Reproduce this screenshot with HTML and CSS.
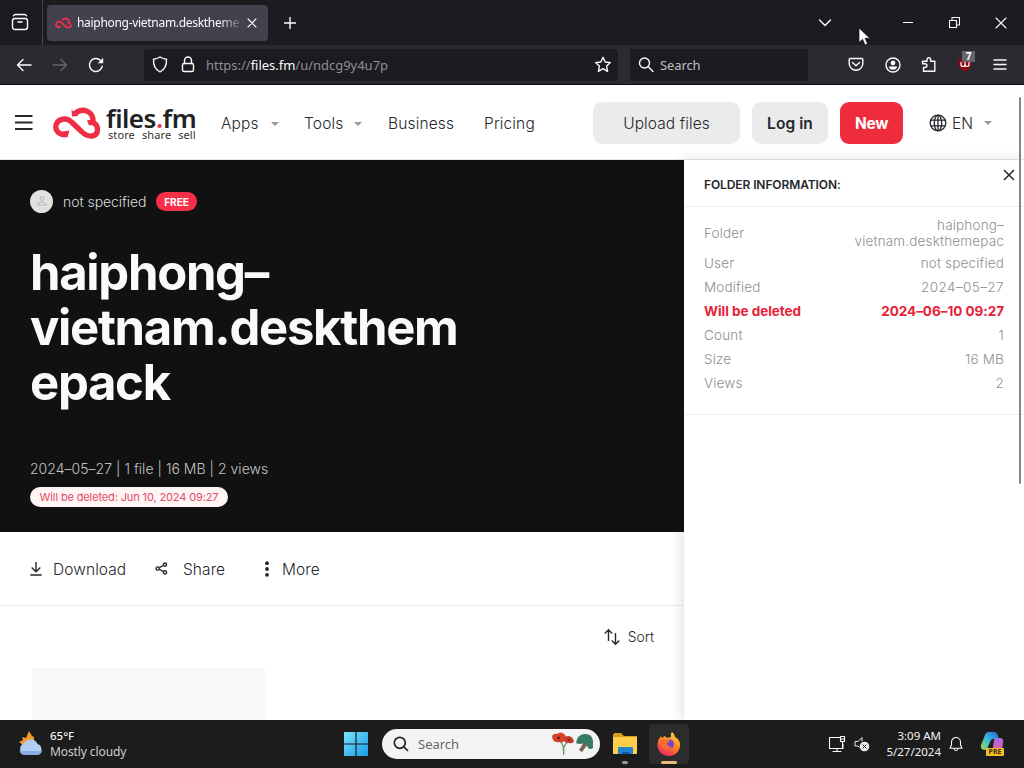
FILE: index.html
```html
<!DOCTYPE html>
<html lang="en">
<head>
    <meta charset="UTF-8">
    <meta name="viewport" content="width=device-width, initial-scale=1.0">
    <title>haiphong-vietnam.deskthemepack</title>
    <link rel="stylesheet" href="styles.css">
</head>
<body>
    <!-- browser tabs -->
    <div class="tabbar">
        <div class="view-btn">
            <svg width="18" height="18" viewBox="0 0 18 18" class="line"><rect x="1.5" y="5.5" width="15" height="11" rx="2.5"/><path d="M2.5 2.8Q3 1.5 4.5 1.5h9q1.500 0 2 1.300M7 9h4"/></svg>
        </div>
        <div class="tab">
            <svg class="tab-logo" width="17" height="12" viewBox="0 0 48 34"><use href="#cloud"/></svg>
            <span class="tab-title">haiphong-vietnam.desktheme</span>
            <svg width="10" height="10" viewBox="0 0 10 10" class="line thin"><path d="M1 1l8 8M9 1l-8 8"/></svg>
        </div>
        <svg class="plus line" width="12" height="12" viewBox="0 0 12 12"><path d="M6 0v12M0 6h12"/></svg>
        <div class="window-btns">
            <svg class="tabs-list line" width="14" height="8" viewBox="0 0 14 8"><path d="M1.500 1L7 6.500 12.500 1"/></svg>
            <svg class="line thin" width="10" height="10" viewBox="0 0 10 10"><path d="M0 4.500h10"/></svg>
            <svg class="line thin" width="11" height="11" viewBox="0 0 11 11"><path d="M.5 3.500h7v7h-7zM3 3V.5h7.500V8H8"/></svg>
            <svg class="line thin" width="12" height="12" viewBox="0 0 12 12"><path d="M1 1l10 10M11 1L1 11"/></svg>
        </div>
    </div>

    <!-- address bar -->
    <div class="toolbar">
        <div class="nav-btns">
            <svg class="line" width="16" height="14" viewBox="0 0 16 14"><path d="M15 7H1.500M7 1.500L1.500 7 7 12.500"/></svg>
            <svg class="line dim" width="16" height="14" viewBox="0 0 16 14"><path d="M1 7h13.500M9 1.500L14.500 7 9 12.500"/></svg>
            <svg class="line" width="16" height="16" viewBox="0 0 16 16"><path d="M14.300 9.200A6.500 6.500 0 1 1 12.300 3.200l2 2"/><path d="M15.200.8v5.400H9.800z" class="solid"/></svg>
        </div>
        <div class="urlbar">
            <svg class="line" width="16" height="17" viewBox="0 0 16 17"><path d="M8 1c2 1.300 4.500 2 6.500 2.200C14.800 9 12.700 13.500 8 16 3.300 13.500 1.200 9 1.500 3.200 3.500 3 6 2.300 8 1z"/></svg>
            <svg class="line" width="14" height="17" viewBox="0 0 14 17"><rect x="1.500" y="7.500" width="11" height="8" rx="1.500"/><path d="M3.500 7.500V4.500a3.500 3.500 0 0 1 7 0v3"/></svg>
            <span class="url">https://<b>files.fm</b>/u/ndcg9y4u7p</span>
            <svg class="star line" width="18" height="18" viewBox="0 0 18 18"><path d="M9 1.300l2.200 4.700 5.200.6-3.800 3.500 1 5.200L9 12.700l-4.600 2.600 1-5.200L1.600 6.600l5.200-.6z"/></svg>
        </div>
        <div class="searchbar">
            <svg class="line" width="16" height="16" viewBox="0 0 16 16"><circle cx="6.500" cy="6" r="5"/><path d="M10.300 9.800L15 14.500"/></svg>
            <span>Search</span>
        </div>
        <div class="extensions">
            <svg class="line" width="16" height="16" viewBox="0 0 16 16"><path d="M2.500 1.500h11q1.300 0 1.300 1.300V6.500a6.800 6.800 0 0 1-13.600 0V2.800Q1.200 1.500 2.500 1.500zM4.500 5.500L8 8.800 11.500 5.500"/></svg>
            <svg class="line" width="16" height="16" viewBox="0 0 16 16"><circle cx="8" cy="8" r="7"/><circle cx="8" cy="6" r="2.400" class="solid"/><path d="M3.800 9.500h8.400Q11.500 12.800 8 12.800T3.800 9.500z" class="solid"/></svg>
            <svg class="line" width="16" height="16" viewBox="0 0 16 16"><path d="M2.500 14.300V10.500h1.500a1.900 1.900 0 0 0 0-3.800H1.500V4.300H6V2.500a1.800 1.800 0 0 1 3.600 0v1.800h4.200v10z"/></svg>
            <div class="ublock">
                <svg width="16" height="16" viewBox="0 0 16 16"><path d="M8 0q3 2 7 2.500Q15.500 12 8 14.500 .5 12 1 2.500 5 2 8 0z" fill="#8b0814"/><path d="M4 5v2.500a2 2 0 0 0 4 0V5v2.500a2 2 0 0 0 4 0V5" class="u"/></svg>
                <b>7</b>
            </div>
            <svg class="line" width="14" height="12" viewBox="0 0 14 12"><path d="M1 1h12M1 5.500h12M1 10h12"/></svg>
        </div>
    </div>

    <div class="page">
        <header class="header">
            <svg class="burger" width="18" height="16" viewBox="0 0 18 16"><path d="M0 1h17.500M0 7.500h17.500M0 14h17.500"/></svg>
            <a class="logo">
                <svg width="48" height="34" viewBox="0 0 48 34">
                    <g id="cloud">
                        <path d="M14 28.500C7.500 30 2.500 25.500 2.800 20.500 3.500 13 13 10.500 18.500 16l10 9.500C35 32 44 31.500 44.500 24c.3-6-5-9-9.500-7" fill="none" stroke="#ee2e45" stroke-width="5.300"/>
                        <path d="M40 15.500C40.500 5 29.500 1 22 7.500" fill="none" stroke="#ee2e45" stroke-width="5.300"/>
                        <path d="M18.500 3.500l.5 7 6.500-.5zM9 25.500l7.500-1-2 7z" fill="#ee2e45"/>
                    </g>
                </svg>
                <div class="logo-text">
                    <div class="logo-name">files<i>.</i>fm</div>
                    <div class="logo-sub"><span>store</span><span>share</span><span>sell</span></div>
                </div>
            </a>
            <nav class="menu">
                <a class="drop apps">Apps</a>
                <a class="drop tools">Tools</a>
                <a class="business">Business</a>
                <a>Pricing</a>
            </nav>
            <a class="btn upload">Upload files</a>
            <a class="btn login">Log in</a>
            <a class="btn new">New</a>
            <a class="lang drop">
                <svg width="18" height="18" viewBox="0 0 18 18"><circle cx="9" cy="9" r="7.800"/><ellipse cx="9" cy="9" rx="3.700" ry="7.800"/><path d="M1.500 6.200h15M1.500 11.800h15M9 1v16"/></svg>
                <span>EN</span>
            </a>
        </header>

        <div class="content">
            <main class="main">
                <section class="hero">
                    <div class="owner">
                        <div class="avatar"><svg width="12" height="12" viewBox="0 0 12 12"><circle cx="6" cy="3.500" r="1.900"/><path d="M1.500 10q.3-3 4.500-3t4.500 3z"/></svg></div>
                        <span>not specified</span>
                        <b class="badge">FREE</b>
                    </div>
                    <h1>haiphong–<br>vietnam.deskthem<br>epack</h1>
                    <p class="meta">2024–05–27 | 1 file | 16 MB | 2 views</p>
                    <div class="expires">Will be deleted: Jun 10, 2024 09:27</div>
                </section>
                <div class="actions">
                    <svg width="12" height="14" viewBox="0 0 12 14"><path d="M6 0v9.500M1.700 5.500L6 9.800l4.300-4.300M.3 13h11.400"/></svg>
                    <a class="download">Download</a>
                    <svg width="13" height="13" viewBox="0 0 13 13"><circle cx="2.700" cy="6.500" r="1.600"/><circle cx="10" cy="2.600" r="1.600"/><circle cx="10" cy="10.400" r="1.600"/><path d="M4.300 5.700l4.100-2.200M4.300 7.300l4.100 2.200"/></svg>
                    <a class="share">Share</a>
                    <svg class="dots" width="6" height="16" viewBox="0 0 6 16"><circle cx="3" cy="2.200" r="1.900"/><circle cx="3" cy="8" r="1.900"/><circle cx="3" cy="13.800" r="1.900"/></svg>
                    <a class="more">More</a>
                </div>
                <div class="sort">
                    <svg width="16" height="18" viewBox="0 0 16 18"><path d="M4.500 13V2M.8 5.500l3.700-3.700 3.700 3.700M11.500 5v11M7.800 12.500l3.700 3.700 3.700-3.700"/></svg>
                    <span>Sort</span>
                </div>
                <div class="file-card"></div>
            </main>

            <aside class="info">
                <div class="info-head">
                    <h2>FOLDER INFORMATION:</h2>
                    <svg width="12" height="12" viewBox="0 0 12 12"><path d="M1 1l10 10M11 1L1 11"/></svg>
                </div>
                <dl>
                    <div class="row first"><dt>Folder</dt><dd>haiphong–<br>vietnam.deskthemepac</dd></div>
                    <div class="row"><dt>User</dt><dd>not specified</dd></div>
                    <div class="row date"><dt>Modified</dt><dd>2024–05–27</dd></div>
                    <div class="row red"><dt>Will be deleted</dt><dd>2024–06–10 09:27</dd></div>
                    <div class="row"><dt>Count</dt><dd>1</dd></div>
                    <div class="row"><dt>Size</dt><dd>16 MB</dd></div>
                    <div class="row"><dt>Views</dt><dd>2</dd></div>
                </dl>
            </aside>
        </div>
        <div class="scrollbar"></div>
    </div>

    <!-- desktop taskbar -->
    <div class="taskbar">
        <svg class="weather" width="26" height="26" viewBox="0 0 26 26">
            <path d="M11 0l3 5 2 1v5l-7 5-4-2-4-3 4-2-1-3 4 1z" fill="#f39a2d"/>
            <path d="M7 24a6 6 0 0 1-1-11.500A7.500 7.500 0 0 1 19.500 13 5.700 5.700 0 0 1 19 24z" fill="#b4cdf2"/>
            <path d="M1.500 20a6 6 0 0 0 5.500 4h12a5.500 5.500 0 0 0 5-4z" fill="#89ace3"/>
        </svg>
        <div class="weather-text"><b>65°F</b><span>Mostly cloudy</span></div>
        <svg class="start" width="24" height="24" viewBox="0 0 24 24">
            <linearGradient id="win" x2="1" y2="1"><stop stop-color="#7be2fb"/><stop offset="1" stop-color="#139ce5"/></linearGradient>
            <path d="M0 0h11.400v11.400H0zM12.600 0H24v11.400H12.600zM0 12.600h11.400V24H0zM12.600 12.600H24V24H12.600z" fill="url(#win)"/>
        </svg>
        <div class="task-search">
            <svg width="16" height="16" viewBox="0 0 16 16"><circle cx="6.800" cy="6.800" r="5.500"/><path d="M10.800 10.800L15 15"/></svg>
            <span>Search</span>
            <svg class="flower" width="44" height="24" viewBox="0 0 44 24">
                <path d="M9 9q5 5 3.500 14M18 9q-5 3-6 10" fill="none" stroke="#759070" stroke-width="1.300"/>
                <path d="M1 5q1-4 5-3 4-3 7 0 3 2 1 5-1 4-5 3-5 1-7-2z" fill="#d5432c"/>
                <path d="M13 8q0-4 5-4 4 1 5 5-1 3-5 2-5 0-5-3z" fill="#c53a29"/>
                <circle cx="7.500" cy="6" r="1.500" fill="#632019"/><circle cx="18" cy="8" r="1.100" fill="#632019"/>
                <path d="M33 10l4 2-6 8-3-2z" fill="#7d6251"/>
                <path d="M25 11q1-8 8-9 8-1 9 7v7q-3 2-5 0-1-4-4-5-4 2-8 0z" fill="#397b62"/>
            </svg>
        </div>
        <div class="app explorer">
            <svg width="26" height="24" viewBox="0 0 26 24"><path d="M1 3q0-2 2-2h6l3 3h13v16H1z" fill="#d99b1c"/><path d="M1 6q0-1 1-1h23v16q0 1-1 1H1z" fill="#ffcf4b"/><path d="M6 22v-6q0-1 1-1h13q1 0 1 1v6z" fill="#2481d0"/><path d="M10 22v-2h7v2z" fill="#135aa3"/></svg>
            <i></i>
        </div>
        <div class="app firefox">
            <svg width="24" height="24" viewBox="0 0 24 24">
                <linearGradient id="fox" x1=".8" x2=".3" y2="1"><stop stop-color="#ffe143"/><stop offset=".45" stop-color="#ff8a22"/><stop offset="1" stop-color="#ed235e"/></linearGradient>
                <path d="M15 0q3 2 3 5 3 1 5 6c1 7-4 13-11 13S0 19 .5 12Q1 7 4 4l1 2 3-2 2 2 4-1q-1-3 1-5z" fill="url(#fox)"/>
                <circle cx="12.500" cy="12" r="4.500" fill="#7546cb"/>
                <path d="M3 9q4-3 7-1l3 1q-1 2-3 2 0 4 5 4-4 4-9 1-2-2-3-7z" fill="#fb6c2f"/>
            </svg>
            <i></i>
        </div>
        <div class="tray">
            <svg class="line thin" width="18" height="18" viewBox="0 0 18 18"><path d="M12 2.500H1.500v11H15V9M5 16.500h8M9 13.500v3M12.500 1.500h4v5h-4zM14.500 6.500v6M12.500 4h4"/></svg>
            <svg class="mute" width="16" height="16" viewBox="0 0 16 16"><path d="M5.500 11.500L4 10H1V5.500h3L8 1.500v4" class="wave"/><circle cx="10.500" cy="10.500" r="4.800" fill="#eee"/><path d="M8.500 8.500l4 4M12.500 8.500l-4 4" class="cross"/></svg>
            <div class="clock"><span>3:09 AM</span><span>5/27/2024</span></div>
            <svg class="bell line thin" width="14" height="16" viewBox="0 0 14 16"><path d="M2.500 9V6a4.500 4.500 0 0 1 9 0v3l1.500 3.300H1zM5 12.500q.3 2 2 2t2-2"/></svg>
            <div class="copilot">
                <svg width="24" height="24" viewBox="0 0 24 24">
                    <linearGradient id="pilot" x1="1" x2="0" y2="1"><stop stop-color="#2a62d8"/><stop offset=".5" stop-color="#35b8e0"/><stop offset="1" stop-color="#a6d94a"/></linearGradient>
                    <linearGradient id="pilot2" x2="0" y2="1"><stop stop-color="#a866e8"/><stop offset="1" stop-color="#f0609a"/></linearGradient>
                    <path d="M5 3q1-3 4-3h5q3 0 4 4l1 3h-6q-2 0-3 3l-2 5q-1 3-4 3-4-1-3-5z" fill="url(#pilot)"/>
                    <path d="M14 8q1-2 3-2h3q4 0 3 5l-1 8q-1 3-5 3H8q4-1 5-7z" fill="url(#pilot2)"/>
                </svg>
                <b>PRE</b>
            </div>
        </div>
    </div>

    <svg class="cursor" width="14" height="20" viewBox="0 0 14 20"><path d="M1 1v14.500l3.500-3.200 2.500 5.700 2.600-1.200-2.500-5.500h4.700z"/></svg>
</body>
</html>
```

FILE: styles.css
```css
* {
    box-sizing: border-box;
}
body {
    margin: 0;
    width: 1024px;
    height: 768px;
    overflow: hidden;
    font-family: Inter, "Liberation Sans", sans-serif;
    background-color: #fff;
    color: #24272c;
}
svg {
    display: block;
    flex: none;
    fill: none;
}
.line {
    stroke: #fbfbfe;
    stroke-width: 1.4;
    stroke-linecap: round;
    stroke-linejoin: round;
}
.thin {
    stroke-width: 1.1;
}
.dim {
    stroke: #66656c;
}
.solid {
    fill: #fbfbfe;
    stroke: none;
}

/* browser */
.tabbar {
    display: flex;
    align-items: center;
    height: 45px;
    background-color: #1c1b20;
    font-family: "Noto Sans", sans-serif;
}
.view-btn {
    width: 43px;
    height: 45px;
    padding: 13px 0 0 11px;
    border-right: 1px solid #45444d;
}
.tab {
    display: flex;
    align-items: center;
    width: 221px;
    height: 36px;
    margin-left: 4px;
    padding: 0 11px 0 8px;
    border-radius: 4px;
    background-color: #42414d;
}
.tab-title {
    width: 163px;
    margin: 0 7px 0 5px;
    white-space: nowrap;
    font-size: 12px;
    letter-spacing: -0.3px;
    color: #fbfbfe;
    -webkit-mask-image: linear-gradient(to right, #000 142px, transparent 168px);
    mask-image: linear-gradient(to right, #000 142px, transparent 168px);
}
.plus {
    margin-left: 16px;
}
.window-btns {
    display: flex;
    align-items: center;
    margin-left: auto;
    padding-right: 17px;
    gap: 36px;
}
.window-btns svg:first-child {
    margin-right: 35px;
}
.window-btns svg:last-child {
    margin-left: -1px;
}
.toolbar {
    display: flex;
    align-items: center;
    height: 40px;
    border-bottom: 1px solid #0c0c0d;
    background-color: #2b2a30;
    font-family: "Noto Sans", sans-serif;
    font-size: 13px;
    color: #bfbfc9;
}
.nav-btns {
    display: flex;
    align-items: center;
    gap: 20px;
    width: 144px;
    padding-left: 16px;
}
.urlbar {
    display: flex;
    align-items: center;
    width: 474px;
    height: 32px;
    padding: 0 6px 0 8px;
    border-radius: 4px;
    background-color: #1c1b20;
}
.urlbar svg + svg {
    margin-left: 13px;
}
.url {
    margin: 0 auto 0 11px;
    color: #8f8f98;
    letter-spacing: -0.02px;
}
.url b {
    font-weight: normal;
    color: #fbfbfe;
}
.searchbar {
    display: flex;
    align-items: center;
    gap: 6px;
    width: 178px;
    height: 32px;
    margin-left: 12px;
    padding-left: 8px;
    background-color: #1c1b20;
}
.searchbar span {
    letter-spacing: -0.1px;
}
.extensions {
    display: flex;
    align-items: center;
    gap: 20px;
    margin-left: auto;
    padding-right: 17px;
}
.extensions > svg:first-child {
    margin-left: -1px;
    margin-right: 1px;
}
.ublock {
    position: relative;
}
.ublock .u {
    stroke: #fff;
    stroke-width: 1.2;
}
.ublock b {
    position: absolute;
    left: 5px;
    top: -6px;
    width: 13px;
    height: 11px;
    background-color: #65646a;
    color: #fff;
    font-size: 10px;
    line-height: 11px;
    text-align: center;
}

/* site header */
.page {
    position: relative;
    height: 635px;
    overflow: hidden;
}
.header {
    display: flex;
    align-items: center;
    height: 75px;
    padding: 2px 0 0 15px;
    border-bottom: 1px solid #e8e8e8;
    font-size: 15.5px;
}
.burger {
    stroke: #24272c;
    stroke-width: 2;
}
.logo {
    display: flex;
    align-items: center;
    width: 168px;
    margin-left: 20px;
}
.logo-text {
    margin-left: 5px;
    white-space: nowrap;
}
.logo-name {
    font-family: "Noto Sans", sans-serif;
    font-weight: 600;
    font-size: 26px;
    line-height: 24px;
    letter-spacing: -0.5px;
    color: #202124;
}
.logo-name i {
    font-style: normal;
    color: #ee2e45;
}
.logo-sub {
    display: flex;
    gap: 7px;
    margin: -1px 0 0 2px;
    font-family: "Noto Sans", sans-serif;
    font-size: 11px;
    line-height: 12px;
    letter-spacing: 0.1px;
    color: #333;
}
.menu {
    display: flex;
    width: 372px;
    font-weight: 350;
    letter-spacing: 0.15px;
}
.menu a {
    padding-top: 1px;
    white-space: nowrap;
}
.drop {
    display: flex;
    align-items: center;
}
.drop::after {
    content: "";
    margin-left: auto;
    border: 4px solid transparent;
    border-top-color: #999;
    border-bottom: 0;
}
.apps {
    width: 58px;
    margin-right: 25px;
}
.tools {
    width: 58px;
    margin-right: 26px;
}
.business {
    width: 96px;
}
.btn {
    display: flex;
    align-items: center;
    justify-content: center;
    height: 42px;
    margin-right: 12px;
    padding-top: 1px;
    border-radius: 9px;
    background-color: #ebebeb;
}
.upload {
    width: 147px;
    font-weight: 350;
    letter-spacing: 0.1px;
}
.login {
    width: 76px;
    font-weight: 600;
    letter-spacing: 0.1px;
}
.new {
    width: 63px;
    margin-right: 26px;
    background-color: #ef2b3e;
    color: #fff;
    font-weight: 700;
    letter-spacing: -0.3px;
}
.lang {
    width: 63px;
    font-weight: 350;
}
.lang svg {
    stroke: #24272c;
    stroke-width: 1.3;
    margin-right: 5px;
}

/* folder */
.content {
    display: flex;
    height: 560px;
}
.main {
    width: 684px;
}
.hero {
    height: 372px;
    padding: 29px 30px;
    background-color: #111;
    color: #fafafa;
}
.owner {
    display: flex;
    align-items: center;
    height: 24px;
    font-size: 14px;
    color: #ddd;
}
.avatar {
    display: flex;
    align-items: center;
    justify-content: center;
    width: 23px;
    height: 23px;
    margin-right: 10px;
    border-radius: 50%;
    background-color: #e1e1e1;
}
.avatar svg {
    stroke: #b7b7b7;
}
.owner span {
    width: 93px;
    white-space: nowrap;
    letter-spacing: -0.05px;
    font-weight: 350;
}
.badge {
    width: 41px;
    height: 19px;
    border-radius: 10px;
    background-color: #f72f49;
    color: #fff;
    font-size: 10px;
    line-height: 20px;
    text-align: center;
}
h1 {
    margin: 32px 0 0;
    font-size: 49px;
    line-height: 55px;
    letter-spacing: -1.3px;
    font-weight: 700;
}
.meta {
    margin: 49px 0 0;
    font-size: 14px;
    line-height: 20px;
    letter-spacing: 0.03px;
    font-weight: 350;
    color: #c4c4c4;
    white-space: nowrap;
}
.expires {
    width: 198px;
    height: 20px;
    margin-top: 8px;
    border-radius: 10px;
    background-color: #fff5f5;
    color: #e14c66;
    font-size: 11px;
    line-height: 20px;
    letter-spacing: -0.13px;
    text-align: center;
    white-space: nowrap;
}
.actions {
    display: flex;
    align-items: center;
    height: 74px;
    padding-left: 30px;
    border-bottom: 1px solid #ececec;
    font-size: 15.5px;
    font-weight: 350;
    letter-spacing: 0.08px;
}
.actions svg,
.sort svg {
    stroke: #24272c;
    stroke-width: 1.4;
}
.actions a {
    margin-left: 11px;
    padding-top: 2px;
}
.actions .download {
    width: 102px;
}
.actions .share {
    width: 81px;
    margin-left: 15px;
}
.actions .more {
    margin-left: 12px;
}
.actions .dots {
    fill: #24272c;
    stroke: none;
}
.sort {
    display: flex;
    align-items: center;
    justify-content: flex-end;
    gap: 8px;
    height: 62px;
    padding-right: 30px;
    font-size: 13.8px;
    font-weight: 350;
}
.file-card {
    width: 233px;
    height: 60px;
    margin-left: 32px;
    background-color: #f8f8f8;
}
.info {
    width: 340px;
    background-color: #fff;
    box-shadow: -2px 0 12px rgba(0, 0, 0, 0.12);
    z-index: 1;
}
.info-head {
    display: flex;
    justify-content: space-between;
    height: 47px;
    padding: 9px 9px 0 20px;
    border-bottom: 1px solid #eee;
}
.info-head h2 {
    margin: 8px 0 0;
    font-size: 12px;
    line-height: 15px;
    font-weight: 600;
    letter-spacing: -0.1px;
}
.info-head svg {
    stroke: #24272c;
    stroke-width: 1.5;
}
dl {
    margin: 0;
    height: 208px;
    padding: 8px 20px 0;
    border-bottom: 1px solid #eee;
    font-size: 13.5px;
    font-weight: 350;
    letter-spacing: 0.17px;
    color: #8f8f8f;
}
.row {
    display: flex;
    justify-content: space-between;
    align-items: center;
    height: 24px;
    line-height: 16px;
}
.row.first {
    height: 36px;
}
.row dd {
    margin: 0;
    text-align: right;
}
.row.date dd {
    letter-spacing: 0.4px;
}
.row.red {
    color: #e72136;
    font-weight: 700;
    letter-spacing: -0.03px;
}
.scrollbar {
    position: absolute;
    z-index: 2;
    right: 3px;
    top: 12px;
    width: 2px;
    height: 387px;
    border-radius: 1px;
    background-color: #858585;
}

/* taskbar */
.taskbar {
    display: flex;
    align-items: center;
    height: 48px;
    padding-left: 18px;
    background-color: #1c1c1c;
    color: #f3f3f3;
    font-family: "Noto Sans", sans-serif;
    font-size: 12px;
}
.weather-text {
    display: flex;
    flex-direction: column;
    width: 294px;
    margin-left: 6px;
    line-height: 16px;
}
.weather-text b {
    font-weight: 500;
    font-size: 11.5px;
}
.weather-text span {
    letter-spacing: -0.1px;
    color: #ccc;
}
.task-search {
    display: flex;
    align-items: center;
    width: 218px;
    height: 30px;
    margin-left: 14px;
    padding: 0 5px 0 11px;
    border-radius: 15px;
    background-color: #f3f3f3;
    color: #666;
    font-size: 13px;
}
.task-search > svg:first-child {
    margin-right: 9px;
    stroke: #222;
    stroke-width: 1.7;
}
.flower {
    margin-left: auto;
}
.app {
    display: flex;
    flex-direction: column;
    align-items: center;
    justify-content: flex-end;
    gap: 5px;
    width: 40px;
    height: 40px;
    border-radius: 4px;
}
.app i {
    width: 6px;
    height: 3px;
    border-radius: 2px;
    background-color: #999;
}
.explorer {
    margin-left: 5px;
}
.firefox {
    margin-left: 4px;
    background-color: #2c2c2c;
}
.firefox i {
    width: 16px;
    background-color: #e8b978;
}
.tray {
    display: flex;
    align-items: center;
    margin-left: auto;
    padding-right: 20px;
}
.mute {
    margin-left: 8px;
}
.mute .wave {
    stroke: #eee;
}
.mute .cross {
    stroke: #1c1c1c;
}
.clock {
    display: flex;
    flex-direction: column;
    width: 71px;
    line-height: 16px;
    font-size: 11.5px;
    text-align: right;
}
.bell {
    margin: 0 17px 0 8px;
}
.copilot {
    position: relative;
}
.copilot b {
    position: absolute;
    right: 0;
    bottom: 0;
    width: 18px;
    height: 8px;
    border-radius: 1px;
    background-color: #f2bf2a;
    color: #3b2b00;
    font-size: 7px;
    line-height: 8px;
    text-align: center;
}
.cursor {
    position: absolute;
    left: 858px;
    top: 27px;
    z-index: 3;
    fill: #fff;
    stroke: #111;
    stroke-width: 0.7;
}
```
